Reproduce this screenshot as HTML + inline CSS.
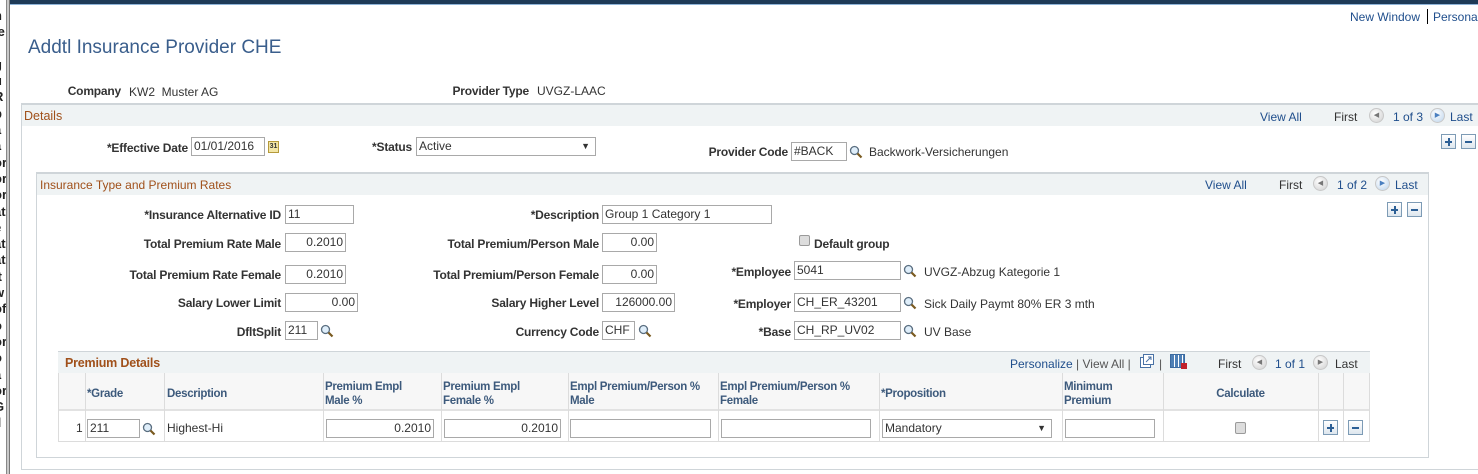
<!DOCTYPE html>
<html><head><meta charset="utf-8"><style>
*{box-sizing:border-box;margin:0;padding:0}
body{width:1478px;height:474px;overflow:hidden;background:#fff;font-family:"Liberation Sans",Arial,sans-serif;font-size:12px;color:#333;position:relative}
.a{position:absolute;white-space:nowrap;line-height:14px}
.l{position:absolute;left:0;text-align:right;font-weight:bold;letter-spacing:-0.2px;line-height:14px;white-space:nowrap;color:#333}
.i{position:absolute;height:19px;border:1px solid #a9a9a9;background:#fff;font-size:12px;line-height:17px;padding:0 2px;color:#333;white-space:nowrap;overflow:hidden}
.r{text-align:right}
.lnk{color:#1f4e8c}
.hdr{position:absolute;background:#eff3f4;border-top:2px solid #cfd5d9}
.pm{position:absolute;width:15px;height:15px;border:1px solid #7d9bb5;background:linear-gradient(#fff,#dde6ee)}
.pm:before{content:"";position:absolute;left:3px;top:6px;width:7px;height:2px;background:#2c5f95}
.pm.p:after{content:"";position:absolute;left:6px;top:3px;width:2px;height:8px;background:#2c5f95}
.arr{position:absolute;width:15px;height:15px;border-radius:50%;background:radial-gradient(circle at 40% 35%,#fff,#cfcfcf);border:1px solid #c8c8c8;font-size:7px;line-height:13px;text-align:center;color:#777}
.gl{position:absolute;background:#dcdcdc}
.th{position:absolute;font-weight:bold;color:#3d5a7c;letter-spacing:-0.3px;line-height:14px;font-size:11.5px}
</style></head><body>
<div class="a" style="left:0;top:8px;width:7px;overflow:hidden;font-size:13px;line-height:16.3px;color:#222;white-space:normal;height:466px;font-weight:bold"><div style="margin-left:-6px;width:14px">h<br>le<br>r<br>g<br>u<br>R<br>b<br>a<br>a<br>or<br>or<br>or<br>at<br>e<br>at<br>at<br>it<br>w<br>of<br>o<br>or<br>o<br>a<br>or<br>G<br>il</div></div>
<div style="position:absolute;left:6px;top:0;width:4px;height:474px;background:#c9c9c9;border-left:1px solid #888;border-right:1px solid #777"></div>
<div style="position:absolute;left:10px;top:0;width:1468px;height:4px;background:#1e3a57"></div>
<div style="position:absolute;left:10px;top:4px;width:1468px;height:1px;background:#8fb4d8"></div>

<div class="a lnk" style="left:1350px;top:10px">New Window</div>
<div style="position:absolute;left:1427px;top:9px;width:1px;height:15px;background:#000"></div>
<div class="a lnk" style="left:1433px;top:10px">Personalize</div>

<div class="a" style="left:28px;top:37px;font-size:19px;line-height:22px;color:#3a5e8c">Addtl Insurance Provider CHE</div>

<div class="l" style="width:121px;top:84px">Company</div>
<div class="a" style="left:129px;top:85px">KW2&nbsp; Muster AG</div>
<div class="l" style="width:529px;top:84px">Provider Type</div>
<div class="a" style="left:537px;top:84px">UVGZ-LAAC</div>

<div style="position:absolute;left:21px;top:103px;width:1460px;height:367px;border:1px solid #cfd5d9"></div>
<div class="hdr" style="left:22px;top:103px;width:1456px;height:23px"></div>
<div class="a" style="left:24px;top:109px;color:#a0501a;font-size:12.5px">Details</div>
<div class="a lnk" style="left:1260px;top:110px">View All</div>
<div class="a" style="left:1334px;top:110px">First</div>
<div class="arr" style="left:1369px;top:108px">◀</div>
<div class="a lnk" style="left:1393px;top:110px">1 of 3</div>
<div class="arr" style="left:1430px;top:108px;background:radial-gradient(circle at 40% 35%,#fff,#bcd4ec);color:#4a7fc0">▶</div>
<div class="a lnk" style="left:1450px;top:110px">Last</div>
<div class="pm p" style="left:1441px;top:134px"></div>
<div class="pm" style="left:1461px;top:134px"></div>

<div class="l" style="width:188px;top:141px">*Effective Date</div>
<div class="i" style="left:191px;top:137px;width:74px">01/01/2016</div>
<div style="position:absolute;left:268px;top:141px;width:11px;height:12px;background:#f3e6a6;border:1px solid #b59a3b;font-size:7px;line-height:10px;text-align:center;font-weight:bold">31</div>
<div class="l" style="width:412px;top:140px">*Status</div>
<div class="i" style="left:416px;top:137px;width:180px">Active<span style="position:absolute;right:5px;top:0;font-size:9px">▼</span></div>
<div class="l" style="width:788px;top:145px">Provider Code</div>
<div class="i" style="left:791px;top:142px;width:56px">#BACK</div>
<svg style="position:absolute;left:849px;top:145px" width="14" height="14" viewBox="0 0 14 14"><circle cx="5.5" cy="5.5" r="4" fill="#dfeefa" stroke="#5a6e80" stroke-width="1.3"/><path d="M8.5 8.5L12.5 12.5" stroke="#7a5a20" stroke-width="2.2"/></svg>
<div class="a" style="left:869px;top:145px">Backwork-Versicherungen</div>

<div style="position:absolute;left:36px;top:172px;width:1393px;height:286px;border:1px solid #cfd5d9"></div>
<div class="hdr" style="left:37px;top:172px;width:1391px;height:23px"></div>
<div class="a" style="left:40px;top:178px;color:#a0501a">Insurance Type and Premium Rates</div>
<div class="a lnk" style="left:1205px;top:178px">View All</div>
<div class="a" style="left:1279px;top:178px">First</div>
<div class="arr" style="left:1313px;top:176px">◀</div>
<div class="a lnk" style="left:1337px;top:178px">1 of 2</div>
<div class="arr" style="left:1375px;top:176px;background:radial-gradient(circle at 40% 35%,#fff,#bcd4ec);color:#4a7fc0">▶</div>
<div class="a lnk" style="left:1395px;top:178px">Last</div>
<div class="pm p" style="left:1387px;top:202px"></div>
<div class="pm" style="left:1407px;top:202px"></div>

<div class="l" style="width:281px;top:208px">*Insurance Alternative ID</div>
<div class="i" style="left:285px;top:205px;width:69px">11</div>
<div class="l" style="width:599px;top:208px">*Description</div>
<div class="i" style="left:602px;top:205px;width:170px">Group 1 Category 1</div>

<div class="l" style="width:281px;top:237px">Total Premium Rate Male</div>
<div class="i r" style="left:285px;top:233px;width:61px">0.2010</div>
<div class="l" style="width:599px;top:237px">Total Premium/Person Male</div>
<div class="i r" style="left:602px;top:233px;width:55px">0.00</div>
<div style="position:absolute;left:799px;top:235px;width:11px;height:11px;border:1px solid #9a9a9a;border-radius:2px;background:#ddd"></div>
<div class="l" style="left:814px;top:237px">Default group</div>

<div class="l" style="width:281px;top:268px">Total Premium Rate Female</div>
<div class="i r" style="left:285px;top:265px;width:61px">0.2010</div>
<div class="l" style="width:599px;top:268px">Total Premium/Person Female</div>
<div class="i r" style="left:602px;top:265px;width:55px">0.00</div>
<div class="l" style="width:791px;top:265px">*Employee</div>
<div class="i" style="left:794px;top:261px;width:107px">5041</div>
<svg style="position:absolute;left:903px;top:264px" width="14" height="14" viewBox="0 0 14 14"><circle cx="5.5" cy="5.5" r="4" fill="#dfeefa" stroke="#5a6e80" stroke-width="1.3"/><path d="M8.5 8.5L12.5 12.5" stroke="#7a5a20" stroke-width="2.2"/></svg>
<div class="a" style="left:924px;top:265px">UVGZ-Abzug Kategorie 1</div>

<div class="l" style="width:281px;top:296px">Salary Lower Limit</div>
<div class="i r" style="left:285px;top:293px;width:73px">0.00</div>
<div class="l" style="width:599px;top:296px">Salary Higher Level</div>
<div class="i r" style="left:602px;top:293px;width:73px">126000.00</div>
<div class="l" style="width:791px;top:297px">*Employer</div>
<div class="i" style="left:794px;top:293px;width:107px">CH_ER_43201</div>
<svg style="position:absolute;left:903px;top:296px" width="14" height="14" viewBox="0 0 14 14"><circle cx="5.5" cy="5.5" r="4" fill="#dfeefa" stroke="#5a6e80" stroke-width="1.3"/><path d="M8.5 8.5L12.5 12.5" stroke="#7a5a20" stroke-width="2.2"/></svg>
<div class="a" style="left:924px;top:297px">Sick Daily Paymt 80% ER 3 mth</div>

<div class="l" style="width:281px;top:325px">DfltSplit</div>
<div class="i" style="left:285px;top:321px;width:33px">211</div>
<svg style="position:absolute;left:320px;top:324px" width="14" height="14" viewBox="0 0 14 14"><circle cx="5.5" cy="5.5" r="4" fill="#dfeefa" stroke="#5a6e80" stroke-width="1.3"/><path d="M8.5 8.5L12.5 12.5" stroke="#7a5a20" stroke-width="2.2"/></svg>
<div class="l" style="width:599px;top:325px">Currency Code</div>
<div class="i" style="left:602px;top:321px;width:33px">CHF</div>
<svg style="position:absolute;left:638px;top:324px" width="14" height="14" viewBox="0 0 14 14"><circle cx="5.5" cy="5.5" r="4" fill="#dfeefa" stroke="#5a6e80" stroke-width="1.3"/><path d="M8.5 8.5L12.5 12.5" stroke="#7a5a20" stroke-width="2.2"/></svg>
<div class="l" style="width:791px;top:325px">*Base</div>
<div class="i" style="left:794px;top:321px;width:107px">CH_RP_UV02</div>
<svg style="position:absolute;left:903px;top:324px" width="14" height="14" viewBox="0 0 14 14"><circle cx="5.5" cy="5.5" r="4" fill="#dfeefa" stroke="#5a6e80" stroke-width="1.3"/><path d="M8.5 8.5L12.5 12.5" stroke="#7a5a20" stroke-width="2.2"/></svg>
<div class="a" style="left:924px;top:325px">UV Base</div>

<div style="position:absolute;left:58px;top:351px;width:1312px;height:91px;border:1px solid #dcdcdc;border-top:none"></div>
<div class="hdr" style="left:58px;top:351px;width:1312px;height:22px;border-top:1px solid #cfd5d9"></div>
<div class="a" style="left:65px;top:356px;color:#a0501a;font-weight:bold;font-size:12.5px;letter-spacing:-0.2px">Premium Details</div>
<div class="a" style="left:1010px;top:357px;color:#555"><span class="lnk">Personalize</span> | View All |</div>
<svg style="position:absolute;left:1140px;top:354px" width="14" height="14" viewBox="0 0 14 14"><rect x="0.5" y="3.5" width="10" height="10" fill="#fff" stroke="#4a72a5"/><rect x="3.5" y="0.5" width="10" height="10" fill="#fff" stroke="#4a72a5"/><path d="M6 8L11 3M8 3h3v3" stroke="#4a72a5" fill="none"/></svg>
<div class="a" style="left:1159px;top:357px;color:#555">|</div>
<div style="position:absolute;left:1170px;top:354px;width:15px;height:14px;background:repeating-linear-gradient(90deg,#4e7fb5 0 3px,#fff 3px 4px),#4e7fb5;border:1px solid #3b6aa0"></div>
<div style="position:absolute;left:1181px;top:363px;width:6px;height:6px;background:#c0202a"></div>
<div class="a" style="left:1218px;top:357px">First</div>
<div class="arr" style="left:1252px;top:355px">◀</div>
<div class="a lnk" style="left:1275px;top:357px">1 of 1</div>
<div class="arr" style="left:1313px;top:355px">▶</div>
<div class="a" style="left:1335px;top:357px">Last</div>

<div style="position:absolute;left:59px;top:373px;width:1310px;height:38px;background:#f7f7f7;border-bottom:2px solid #e2e2e2"></div>
<div class="gl" style="left:85px;top:373px;width:1px;height:68px"></div>
<div class="gl" style="left:164px;top:373px;width:1px;height:68px"></div>
<div class="gl" style="left:323px;top:373px;width:1px;height:68px"></div>
<div class="gl" style="left:441px;top:373px;width:1px;height:68px"></div>
<div class="gl" style="left:568px;top:373px;width:1px;height:68px"></div>
<div class="gl" style="left:718px;top:373px;width:1px;height:68px"></div>
<div class="gl" style="left:879px;top:373px;width:1px;height:68px"></div>
<div class="gl" style="left:1062px;top:373px;width:1px;height:68px"></div>
<div class="gl" style="left:1163px;top:373px;width:1px;height:68px"></div>
<div class="gl" style="left:1318px;top:373px;width:1px;height:68px"></div>
<div class="gl" style="left:1343px;top:373px;width:1px;height:68px"></div>

<div class="th" style="left:87px;top:387px">*Grade</div>
<div class="th" style="left:167px;top:387px">Description</div>
<div class="th" style="left:325px;top:380px">Premium Empl<br>Male %</div>
<div class="th" style="left:443px;top:380px">Premium Empl<br>Female %</div>
<div class="th" style="left:570px;top:380px">Empl Premium/Person %<br>Male</div>
<div class="th" style="left:720px;top:380px">Empl Premium/Person %<br>Female</div>
<div class="th" style="left:881px;top:387px">*Proposition</div>
<div class="th" style="left:1064px;top:380px">Minimum<br>Premium</div>
<div class="th" style="left:1163px;top:387px;width:155px;text-align:center">Calculate</div>

<div class="a" style="left:76px;top:421px">1</div>
<div class="i" style="left:87px;top:419px;width:53px">211</div>
<svg style="position:absolute;left:142px;top:422px" width="14" height="14" viewBox="0 0 14 14"><circle cx="5.5" cy="5.5" r="4" fill="#dfeefa" stroke="#5a6e80" stroke-width="1.3"/><path d="M8.5 8.5L12.5 12.5" stroke="#7a5a20" stroke-width="2.2"/></svg>
<div class="a" style="left:167px;top:421px">Highest-Hi</div>
<div class="i r" style="left:326px;top:419px;width:108px">0.2010</div>
<div class="i r" style="left:444px;top:419px;width:117px">0.2010</div>
<div class="i" style="left:570px;top:419px;width:141px"></div>
<div class="i" style="left:721px;top:419px;width:150px"></div>
<div class="i" style="left:882px;top:419px;width:170px">Mandatory<span style="position:absolute;right:5px;top:0;font-size:9px">▼</span></div>
<div class="i" style="left:1065px;top:419px;width:90px"></div>
<div style="position:absolute;left:1235px;top:422px;width:11px;height:12px;border:1px solid #9a9a9a;border-radius:2px;background:#ddd"></div>
<div class="pm p" style="left:1323px;top:420px"></div>
<div class="pm" style="left:1348px;top:420px"></div>
</body></html>
